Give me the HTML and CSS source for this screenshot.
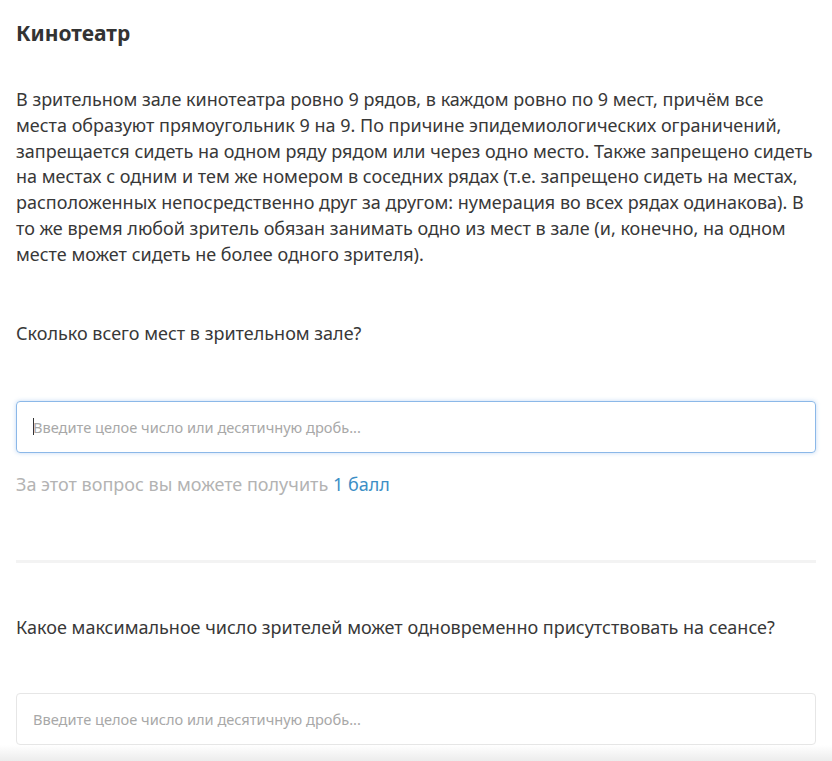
FILE: index.html
```
<!DOCTYPE html>
<html lang="ru">
<head>
<meta charset="utf-8">
<link rel="stylesheet" href="styles.css">
</head>
<body>
<main class="page">
  <h1 class="title">Кинотеатр</h1>
  <p class="text">В зрительном зале кинотеатра ровно 9 рядов, в каждом ровно по 9 мест, причём все<br>места образуют прямоугольник 9 на 9. По причине эпидемиологических ограничений,<br>запрещается сидеть на одном ряду рядом или через одно место. Также запрещено сидеть<br>на местах с одним и тем же номером в соседних рядах (т.е. запрещено сидеть на местах,<br>расположенных непосредственно друг за другом: нумерация во всех рядах одинакова). В<br>то же время любой зритель обязан занимать одно из мест в зале (и, конечно, на одном<br>месте может сидеть не более одного зрителя).</p>
  <section class="question">
    <p class="q-text">Сколько всего мест в зрительном зале?</p>
    <div class="field field-focus"><span class="caret"></span><span class="placeholder">Введите целое число или десятичную дробь...</span></div>
    <p class="hint">За этот вопрос вы можете получить <span class="points">1 балл</span></p>
  </section>
  <hr class="divider">
  <section class="question">
    <p class="q-text q2">Какое максимальное число зрителей может одновременно присутствовать на сеансе?</p>
    <div class="field field2"><span class="placeholder">Введите целое число или десятичную дробь...</span></div>
  </section>
</main>
<div class="bottom-shade"></div>
</body>
</html>
```
FILE: styles.css
```
html, body {
  margin: 0;
  padding: 0;
  background: #fff;
  overflow: hidden;
  height: 761px;
}
body {
  font-family: "Noto Sans", "Liberation Sans", sans-serif;
  color: #383838;
  position: relative;
}
.page {
  padding: 0 16px;
}
.title {
  margin: 0;
  padding-top: 19px;
  font-size: 21px;
  line-height: 28px;
  font-weight: 700;
  color: #333;
}
.text {
  margin: 40px 0 0;
  font-size: 18px;
  line-height: 25.8px;
  white-space: nowrap;
}
.question {
  display: flex;
  flex-direction: column;
}
.q-text {
  margin: 52px 0 0;
  font-size: 18px;
  line-height: 26px;
}
.field {
  margin-top: 55px;
  border: 1px solid #e6e6e6;
  border-radius: 4px;
  display: flex;
  align-items: center;
  padding-left: 16px;
  box-sizing: border-box;
  height: 52px;
}
.field2 {
  margin-top: 53px;
}
.field-focus {
  border-color: #8bb8e8;
  box-shadow: 0 0 4px rgba(120, 170, 230, 0.45);
}
.caret {
  width: 1px;
  height: 17px;
  background: #333;
  margin-right: -1px;
}
.placeholder {
  font-size: 14.6px;
  color: #a8a8a8;
}
.hint {
  margin: 18px 0 0;
  font-size: 18px;
  line-height: 26px;
  color: #b3b3b3;
}
.points {
  color: #3d8fc6;
}
.divider {
  margin: 63px 0 0;
  border: 0;
  height: 3px;
  background: #f3f3f3;
}
.q2 {
  margin-top: 51px;
}
.bottom-shade {
  position: absolute;
  left: 0;
  right: 0;
  bottom: 0;
  height: 16px;
  background: linear-gradient(#ffffff, #ececec);
}
```
